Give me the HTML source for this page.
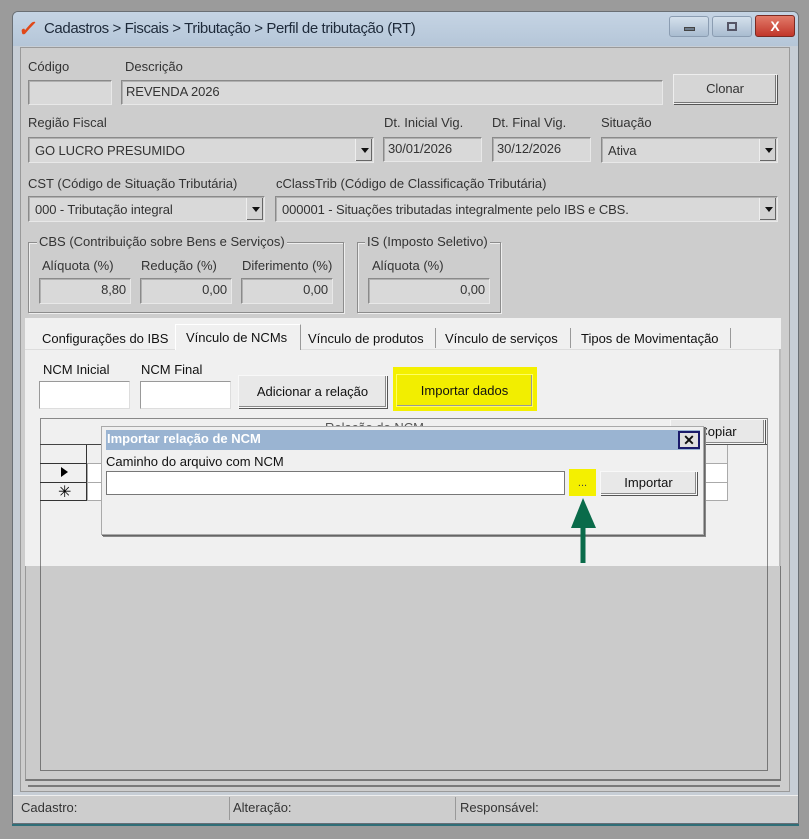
<!DOCTYPE html>
<html><head><meta charset="utf-8"><style>
*{box-sizing:border-box;margin:0;padding:0}
body{width:809px;height:839px;background:#9b9b9b;position:relative;overflow:hidden;font-family:"Liberation Sans",sans-serif;color:#222}
.a{position:absolute}
.t{position:absolute;font-size:13px;letter-spacing:0px;white-space:nowrap;color:#333}
.in{position:absolute;background:#d9d9d9;border:1px solid #8a8a8a;border-right-color:#e8e8e8;border-bottom-color:#e8e8e8;box-shadow:inset 1px 1px 0 #b0b0b0;font-size:13px;letter-spacing:-0.1px;padding:3px 4px;color:#333;white-space:nowrap}
.cb .ar{position:absolute;right:1px;top:1px;bottom:1px;width:17px;background:#d2d2d2;border-left:1px solid #eee;box-shadow:inset -1px -1px 0 #666}
.cb .ar:after{content:"";position:absolute;left:5px;top:9px;border:4px solid transparent;border-top:5px solid #111}
.btn{position:absolute;background:#d6d6d6;border:1px solid #eee;box-shadow:inset -1px -1px 0 #777,1px 1px 0 #555;text-align:center;font-size:13px;letter-spacing:-0.1px;color:#333}
.gb{position:absolute;border:1px solid #8c8c8c;box-shadow:1px 1px 0 #eee,inset 1px 1px 0 #eee}
.n{position:absolute;font-size:13px;white-space:nowrap;color:#111}
.w{position:absolute;background:#fff;border:1px solid #999;border-right-color:#ddd;border-bottom-color:#ddd}
.wb{position:absolute;background:#e8e8e8;border:1px solid #f8f8f8;box-shadow:inset -1px -1px 0 #8a8a8a,1px 1px 0 #555;text-align:center;font-size:13px;color:#111}
</style></head><body>
<div class="a" style="left:12px;top:11px;width:787px;height:813px;background:#c7ced6;border:1px solid #6a6f74;border-radius:6px 6px 0 0;box-shadow:0 2px 0 #2f6e78"></div>
<div class="a" style="left:13px;top:12px;width:785px;height:34px;background:linear-gradient(#c5d4e4,#b5c6d8);border-radius:5px 5px 0 0"></div>
<div class="a" style="left:19px;top:16px;font-size:22px;color:#e04818;font-weight:bold;transform:skewX(-10deg)">✓</div>
<div class="t" style="left:44px;top:20px;font-size:15px;letter-spacing:-0.4px;color:#1e2a3a">Cadastros &gt; Fiscais &gt; Tributação &gt; Perfil de tributação (RT)</div>
<div class="a" style="left:669px;top:16px;width:40px;height:21px;background:linear-gradient(#d4e0ec,#a9bcd0);border:1px solid #8b9db2;border-radius:3px"><div class="a" style="left:14px;top:10px;width:11px;height:4px;background:#6d7b8a;border:1px solid #444"></div></div>
<div class="a" style="left:712px;top:16px;width:40px;height:21px;background:linear-gradient(#d4e0ec,#a9bcd0);border:1px solid #8b9db2;border-radius:3px"><div class="a" style="left:14px;top:5px;width:10px;height:9px;border:2px solid #556"></div></div>
<div class="a" style="left:755px;top:15px;width:40px;height:22px;background:linear-gradient(#e27b6a,#c1362a);border:1px solid #7a2a22;border-radius:3px;color:#fff;font-weight:bold;font-size:14px;text-align:center;line-height:20px">X</div>
<div class="a" style="left:20px;top:47px;width:770px;height:745px;background:#cdcdcd;border:1px solid #9a9a9a"></div>

<div class="t" style="left:28px;top:59px">Código</div>
<div class="t" style="left:125px;top:59px">Descrição</div>
<div class="in" style="left:28px;top:80px;width:84px;height:25px"></div>
<div class="in" style="left:121px;top:80px;width:542px;height:25px">REVENDA 2026</div>
<div class="btn" style="left:673px;top:74px;width:104px;height:30px;line-height:28px">Clonar</div>

<div class="t" style="left:28px;top:115px">Região Fiscal</div>
<div class="t" style="left:384px;top:115px">Dt. Inicial Vig.</div>
<div class="t" style="left:492px;top:115px">Dt. Final Vig.</div>
<div class="t" style="left:601px;top:115px">Situação</div>
<div class="in cb" style="left:28px;top:137px;width:346px;height:26px;padding:5px 6px">GO LUCRO PRESUMIDO<div class="ar"></div></div>
<div class="in" style="left:383px;top:137px;width:99px;height:25px">30/01/2026</div>
<div class="in" style="left:492px;top:137px;width:99px;height:25px">30/12/2026</div>
<div class="in cb" style="left:601px;top:137px;width:177px;height:26px;padding:5px 6px">Ativa<div class="ar"></div></div>

<div class="t" style="left:28px;top:176px">CST (Código de Situação Tributária)</div>
<div class="t" style="left:276px;top:176px">cClassTrib (Código de Classificação Tributária)</div>
<div class="in cb" style="left:28px;top:196px;width:237px;height:26px;padding:5px 6px">000 - Tributação integral<div class="ar"></div></div>
<div class="in cb" style="left:275px;top:196px;width:503px;height:26px;padding:5px 6px">000001 - Situações tributadas integralmente pelo IBS e CBS.<div class="ar"></div></div>

<div class="gb" style="left:28px;top:242px;width:316px;height:71px"></div>
<div class="t" style="left:37px;top:234px;background:#cdcdcd;padding:0 2px">CBS (Contribuição sobre Bens e Serviços)</div>
<div class="gb" style="left:357px;top:242px;width:144px;height:71px"></div>
<div class="t" style="left:365px;top:234px;background:#cdcdcd;padding:0 2px">IS (Imposto Seletivo)</div>
<div class="t" style="left:42px;top:258px">Alíquota (%)</div>
<div class="t" style="left:141px;top:258px">Redução (%)</div>
<div class="t" style="left:242px;top:258px">Diferimento (%)</div>
<div class="t" style="left:372px;top:258px">Alíquota (%)</div>
<div class="in" style="left:39px;top:278px;width:92px;height:26px;text-align:right">8,80</div>
<div class="in" style="left:140px;top:278px;width:92px;height:26px;text-align:right">0,00</div>
<div class="in" style="left:241px;top:278px;width:92px;height:26px;text-align:right">0,00</div>
<div class="in" style="left:368px;top:278px;width:122px;height:26px;text-align:right">0,00</div>

<div class="a" style="left:25px;top:318px;width:756px;height:248px;background:#f0f0f0"></div>
<div class="a" style="left:25px;top:566px;width:756px;height:215px;background:#cbcbcb;border-left:1px solid #999;border-right:1px solid #777;border-bottom:2px solid #777"></div>
<div class="a" style="left:25px;top:349px;width:756px;height:1px;background:#ddd"></div>
<div class="a" style="left:779px;top:349px;width:2px;height:217px;background:#bbb"></div>
<div class="n" style="left:42px;top:331px">Configurações do IBS</div>
<div class="a" style="left:175px;top:324px;width:126px;height:26px;background:#f0f0f0;border:1px solid #fff;border-right:1px solid #999;border-bottom:none"></div>
<div class="n" style="left:186px;top:330px">Vínculo de NCMs</div>
<div class="a" style="left:435px;top:328px;width:1px;height:20px;background:#999"></div>
<div class="n" style="left:308px;top:331px">Vínculo de produtos</div>
<div class="a" style="left:570px;top:328px;width:1px;height:20px;background:#999"></div>
<div class="n" style="left:445px;top:331px">Vínculo de serviços</div>
<div class="a" style="left:730px;top:328px;width:1px;height:20px;background:#999"></div>
<div class="n" style="left:581px;top:331px">Tipos de Movimentação</div>

<div class="n" style="left:43px;top:362px">NCM Inicial</div>
<div class="n" style="left:141px;top:362px">NCM Final</div>
<div class="w" style="left:39px;top:381px;width:91px;height:28px"></div>
<div class="w" style="left:140px;top:381px;width:91px;height:28px"></div>
<div class="wb" style="left:238px;top:375px;width:149px;height:33px;line-height:31px">Adicionar a relação</div>
<div class="a" style="left:393px;top:367px;width:144px;height:44px;background:#f4f000"></div>
<div class="a" style="left:396px;top:374px;width:137px;height:33px;background:#f2ee00;border:1px solid #ffff60;box-shadow:inset -1px -1px 0 #999;text-align:center;line-height:31px;font-size:13px;color:#111">Importar dados</div>

<div class="a" style="left:40px;top:418px;width:728px;height:353px;background:#f0f0f0;border:1px solid #888"></div>
<div class="a" style="left:40px;top:566px;width:728px;height:205px;background:#cbcbcb;border:1px solid #777;border-top:none"></div>
<div class="a" style="left:40px;top:444px;width:727px;height:1px;background:#444"></div>
<div class="n" style="left:325px;top:420px;color:#555">Relação de NCM</div>
<div class="wb" style="left:670px;top:419px;width:95px;height:25px;line-height:23px">Copiar</div>
<div class="a" style="left:40px;top:445px;width:47px;height:56px;border-right:1px solid #333"></div>
<div class="a" style="left:40px;top:463px;width:47px;height:1px;background:#333"></div>
<div class="a" style="left:40px;top:482px;width:47px;height:1px;background:#333"></div>
<div class="a" style="left:40px;top:500px;width:47px;height:1px;background:#333"></div>
<div class="a" style="left:87px;top:463px;width:641px;height:38px;background:#fff;border:1px solid #aaa"></div>
<div class="a" style="left:87px;top:482px;width:641px;height:1px;background:#aaa"></div>
<div class="a" style="left:727px;top:445px;width:1px;height:56px;background:#aaa"></div>
<div class="a" style="left:61px;top:467px;border:5px solid transparent;border-left:7px solid #000;border-right:none"></div>
<div class="a" style="left:58px;top:482px;font-size:16px;color:#000">✳</div>

<div class="a" style="left:101px;top:426px;width:603px;height:109px;background:#f0f0f0;border:1px solid #aaa;box-shadow:1px 1px 0 #666,2px 2px 0 #888"></div>
<div class="a" style="left:106px;top:430px;width:594px;height:20px;background:#9ab4d2"></div>
<div class="a" style="left:107px;top:431px;font-size:13px;font-weight:bold;color:#fff">Importar relação de NCM</div>
<div class="a" style="left:678px;top:431px;width:22px;height:18px;background:#e0e0e0;border:2px solid #1a1a6a;text-align:center;font-size:14px;line-height:14px;font-weight:bold;color:#111">✕</div>
<div class="n" style="left:106px;top:454px">Caminho do arquivo com NCM</div>
<div class="w" style="left:106px;top:471px;width:459px;height:24px;border-color:#777"></div>
<div class="a" style="left:569px;top:469px;width:27px;height:27px;background:#f4f000;text-align:center;font-size:11px;line-height:28px;color:#444">...</div>
<div class="wb" style="left:600px;top:471px;width:97px;height:24px;line-height:22px">Importar</div>
<svg class="a" style="left:565px;top:495px" width="36" height="74"><polygon points="18,3 31,33 6,33" fill="#0a6b4a"/><rect x="15.5" y="30" width="5" height="38" fill="#0a6b4a"/></svg>

<div class="a" style="left:28px;top:785px;width:752px;height:2px;background:#7a7a7a"></div>
<div class="a" style="left:13px;top:795px;width:785px;height:27px;background:#cdcdcd;border-top:1px solid #eee"></div>
<div class="a" style="left:229px;top:797px;width:1px;height:23px;background:#999"></div>
<div class="a" style="left:455px;top:797px;width:1px;height:23px;background:#999"></div>
<div class="t" style="left:21px;top:800px">Cadastro:</div>
<div class="t" style="left:233px;top:800px">Alteração:</div>
<div class="t" style="left:460px;top:800px">Responsável:</div>
</body></html>
